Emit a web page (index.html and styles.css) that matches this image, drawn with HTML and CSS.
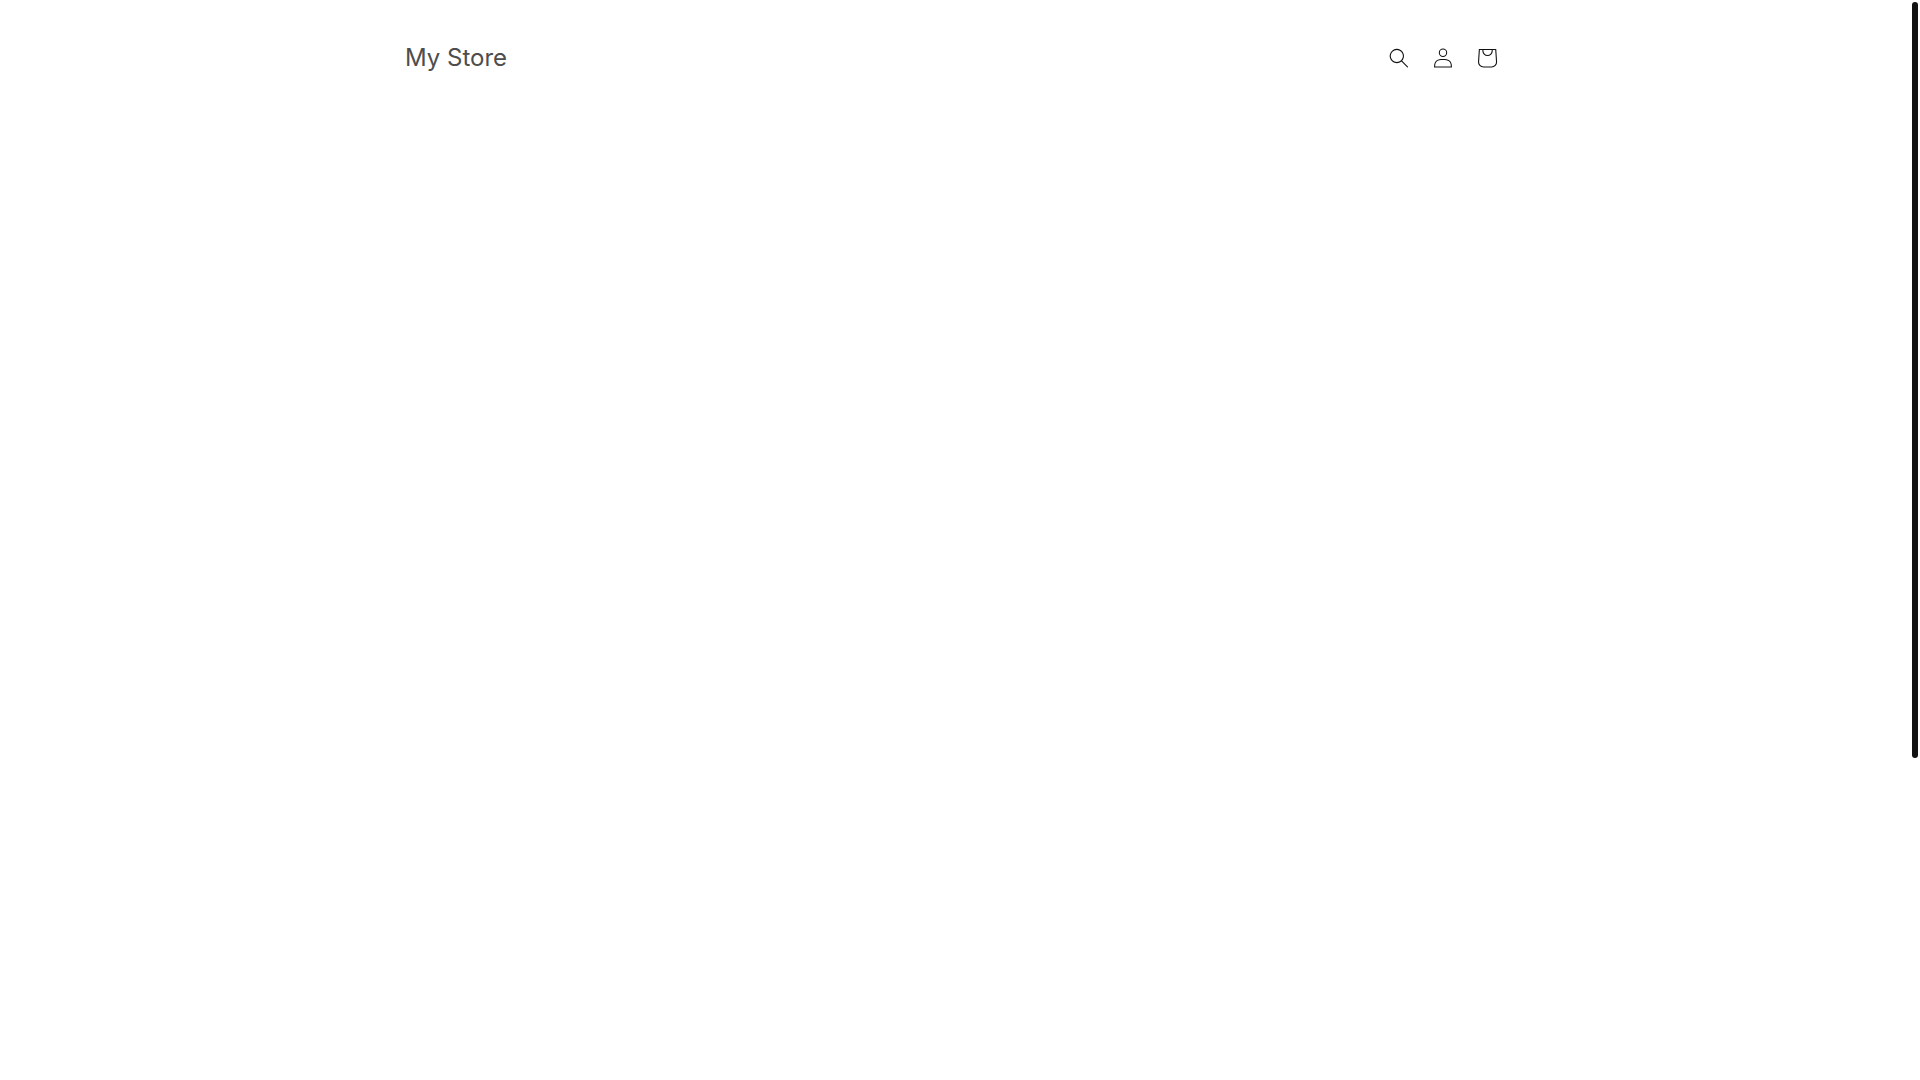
FILE: index.html
```html
<!DOCTYPE html>
<html lang="en">
<head>
    <meta charset="UTF-8">
    <meta name="viewport" content="width=device-width, initial-scale=1.0">
    <title>My Store</title>
    <link rel="stylesheet" href="styles.css">
</head>
<body>
    <header class="header">
        <h1 class="header-heading"><a href="/">My Store</a></h1>
        <div class="header-icons">
            <button type="button" class="header-icon" aria-label="Search">
                <svg class="icon" viewBox="0 0 18 19" aria-hidden="true">
                    <path fill-rule="evenodd" clip-rule="evenodd" d="M11.03 11.68A5.784 5.784 0 112.85 3.5a5.784 5.784 0 018.18 8.18zm.26 1.12a6.78 6.78 0 11.72-.7l5.4 5.4a.5.5 0 11-.71.7l-5.41-5.4z"/>
                </svg>
            </button>
            <a href="/account/login" class="header-icon" aria-label="Log in">
                <svg class="icon" viewBox="0 0 18 19" aria-hidden="true">
                    <path fill-rule="evenodd" clip-rule="evenodd" d="M6 4.5a3 3 0 116 0 3 3 0 01-6 0zm3-4a4 4 0 100 8 4 4 0 000-8zm5.58 12.15c1.12.82 1.83 2.24 1.91 4.85H1.51c.08-2.6.79-4.03 1.9-4.85C4.66 11.75 6.5 11.5 9 11.5s4.35.26 5.58 1.15zM9 10.5c-2.5 0-4.65.24-6.17 1.35C1.27 12.98.5 14.93.5 18v.5h17V18c0-3.07-.77-5.02-2.33-6.15-1.52-1.1-3.67-1.35-6.17-1.35z"/>
                </svg>
            </a>
            <a href="/cart" class="header-icon" aria-label="Cart">
                <svg class="icon icon-cart" viewBox="0 0 40 40" aria-hidden="true">
                    <path fill-rule="evenodd" d="M15.75 11.8h-3.16l-.77 11.6a5 5 0 0 0 4.99 5.34h7.38a5 5 0 0 0 4.99-5.33L28.4 11.8zm0 1h-2.22l-.71 10.67a4 4 0 0 0 3.99 4.27h7.38a4 4 0 0 0 4-4.27l-.72-10.67h-2.22v.63a4.75 4.75 0 1 1-9.5 0zm8.5 0h-7.5v.63a3.75 3.75 0 1 0 7.5 0z"/>
                </svg>
            </a>
        </div>
    </header>
    <main></main>
    <div class="scroll-thumb"></div>
</body>
</html>
```

FILE: styles.css
```css
* {
    box-sizing: border-box;
}
body {
    margin: 0;
    padding-right: 6px;
    min-height: 100vh;
    background-color: #fff;
    color: #121212;
    font-family: Inter, sans-serif;
}
.header {
    display: flex;
    justify-content: space-between;
    align-items: center;
    max-width: 1200px;
    margin: 0 auto;
    padding: 36px 48px;
}
.header-heading {
    margin: 0;
    font-size: 24px;
    font-weight: 400;
    line-height: 32px;
}
.header-heading a {
    color: #4d4d4d;
    text-decoration: none;
}
.header-icons {
    display: flex;
}
.header-icon {
    display: flex;
    justify-content: center;
    align-items: center;
    width: 44px;
    height: 44px;
    padding: 0;
    border: 0;
    background: none;
    color: #121212;
    cursor: pointer;
}
.icon {
    width: 20px;
    height: 20px;
    fill: currentColor;
}
.icon-cart {
    width: 44px;
    height: 44px;
}

/* scroll indicator */
.scroll-thumb {
    position: fixed;
    top: 2px;
    right: 2px;
    width: 6px;
    height: 70vh;
    border-radius: 3px;
    background-color: #121212;
}
```
